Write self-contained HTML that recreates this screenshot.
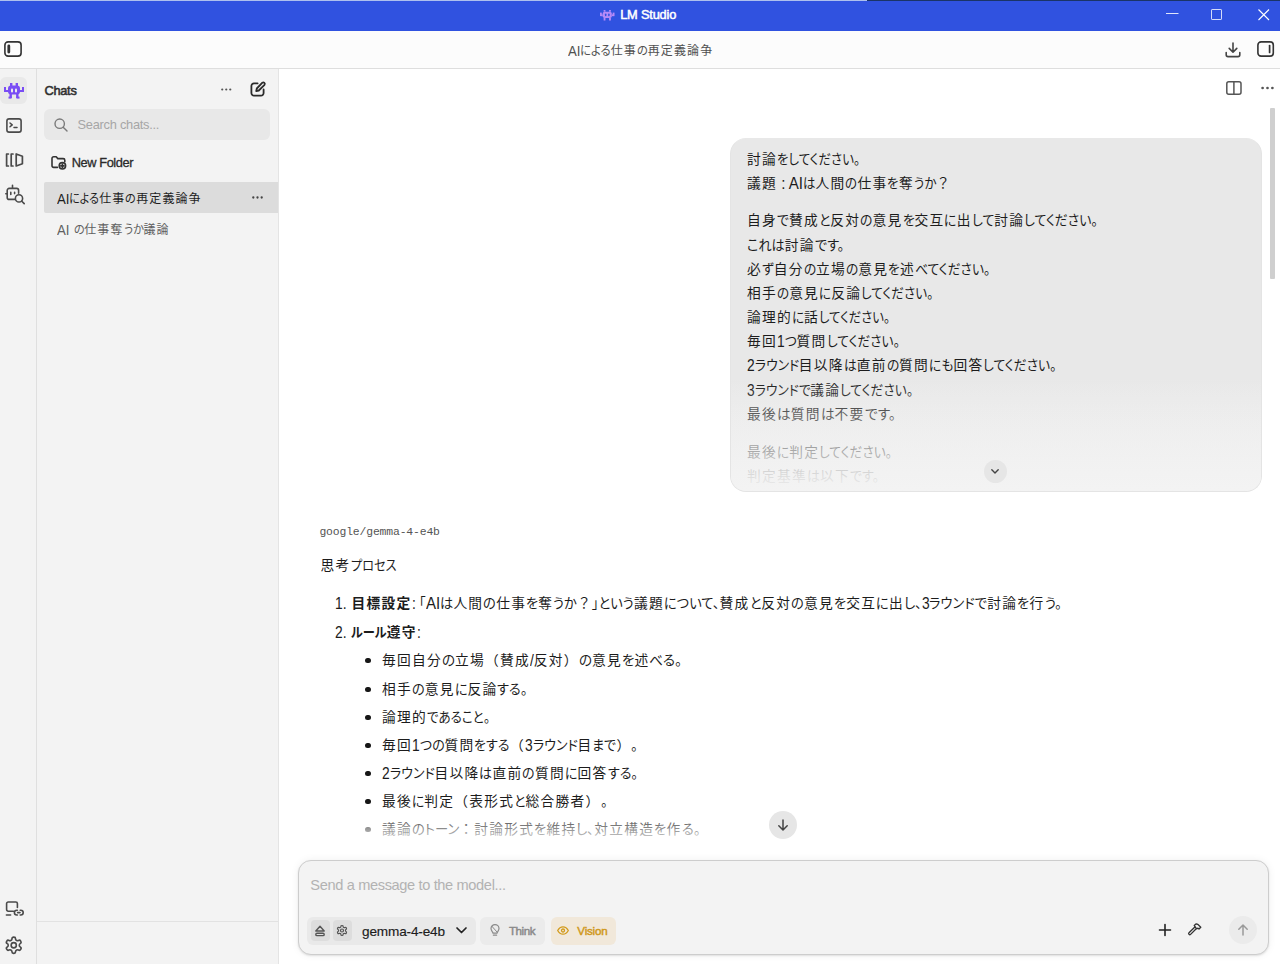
<!DOCTYPE html>
<html lang="ja">
<head>
<meta charset="utf-8">
<title>LM Studio</title>
<style>
*{box-sizing:border-box;margin:0;padding:0}
html,body{width:1280px;height:964px;overflow:hidden;background:#fff}
body{position:relative;font-family:"Liberation Sans","Noto Sans CJK JP",sans-serif;color:#1f1f1f;-webkit-font-smoothing:antialiased}
.abs{position:absolute}
svg{display:block;overflow:visible}
.ic{position:absolute;fill:none;stroke:#4a4a4a;stroke-width:1.6;stroke-linecap:round;stroke-linejoin:round}
/* ---------- title bar ---------- */
#titlebar{position:absolute;left:0;top:0;width:1280px;height:31px;background:#3052e0}
#topline-a{position:absolute;left:0;top:0;width:866.500px;height:1px;background:#aec0ee}
#topline-b{position:absolute;left:866.500px;top:0;width:413.500px;height:1px;background:#1a3468}
/* ---------- toolbar ---------- */
#toolbar{position:absolute;left:0;top:31px;width:1280px;height:38px;background:#fcfcfc;border-bottom:1px solid #dedede}
/* ---------- rail + sidebar ---------- */
#rail{position:absolute;left:0;top:69px;width:36.600px;height:895px;background:#f3f3f3;border-right:1px solid #dfdfdf}
#rail-active{position:absolute;left:0;top:8px;width:27px;height:27px;border-radius:6px;background:#e9e9e9}
#sidebar{position:absolute;left:36.600px;top:69px;width:242.400px;height:895px;background:#f3f3f3;border-right:1px solid #e4e4e4}
#side-divider{position:absolute;left:0;top:852px;width:241.400px;height:1px;background:#e2e2e2}
#search{position:absolute;left:7.800px;top:40.200px;width:225.800px;height:30.500px;border-radius:6px;background:#e8e8e8}
#chat1{position:absolute;left:7.900px;top:113.200px;width:234px;height:30.400px;background:#dcdcdc;border-radius:2px 0 0 2px}
/* ---------- main ---------- */
#main{position:absolute;left:279px;top:69px;width:1001px;height:895px;background:#fff;overflow:hidden}
#scroll{position:absolute;left:990.700px;top:38.800px;width:5.400px;height:171px;border-radius:1px;background:#cfcfcf}
#bubble{position:absolute;left:451px;top:69px;width:532px;height:354px;border-radius:16px;background:linear-gradient(#e8e8e8 0,#e8e8e8 68%,#f3f3f3 100%);border:1px solid #e4e4e4;border-top-color:#e8e8e8}
#bubblefade{position:absolute;left:0;top:241px;width:530px;height:111px;border-radius:0 0 15px 15px;background:linear-gradient(rgba(240,240,240,0) 0,rgba(240,240,240,.30) 30%,rgba(241,241,241,.62) 60%,rgba(242,242,242,.86) 82%,rgba(243,243,243,1) 100%)}
#expandbtn{position:absolute;left:252.500px;top:320.800px;width:23px;height:23px;border-radius:50%;background:#e6e6e6}
#assistant{position:absolute;left:0;top:0;width:1001px;height:791px}
#assistant ol,#assistant ul{list-style:none}
#assistant ul li::before{content:"";position:absolute;left:-17.100px;top:8.800px;width:5.600px;height:5.600px;border-radius:50%;background:#161616}
#chatfade{position:absolute;left:0;top:737px;width:985px;height:44px;background:linear-gradient(rgba(255,255,255,0) 0,rgba(255,255,255,.56) 52%,rgba(255,255,255,.85) 78%,rgba(255,255,255,1) 100%)}
#downbtn{position:absolute;left:490.300px;top:741.500px;width:28px;height:28px;border-radius:50%;background:#e6e6e6}
#composer{position:absolute;left:19px;top:791px;width:971px;height:95px;border-radius:13px;background:#f3f3f3;border:1px solid #cdcdcd;box-shadow:0 0 9px rgba(0,0,0,.06),0 1px 2px rgba(0,0,0,.10)}
#modelchip{position:absolute;left:8px;top:55.500px;width:168.500px;height:28px;border-radius:6px;background:#e9e9e9}
.mini{position:absolute;top:3.500px;width:19.500px;height:20.500px;border-radius:4px;background:#dddddd}
#thinkchip{position:absolute;left:181.200px;top:55.500px;width:65.300px;height:28px;border-radius:6px;background:#ebebeb}
#visionchip{position:absolute;left:251.500px;top:55.500px;width:65.500px;height:28px;border-radius:6px;background:#f1e8da}
#sendbtn{position:absolute;left:929.800px;top:54.700px;width:28.500px;height:28.500px;border-radius:50%;background:#ebebeb}
/* ---------- fitted text lines ---------- */
.L{position:absolute;white-space:nowrap;font-weight:400}
.L strong{font-weight:700}
.k{display:inline-block;white-space:nowrap;font-feature-settings:"palt";vertical-align:baseline;height:1em;line-height:1em;letter-spacing:0}
.a{display:inline-block;white-space:pre;letter-spacing:0;font-size:1.17em;height:1em;line-height:1em;vertical-align:baseline;position:relative;top:1px}
.a>span{display:inline-block;transform-origin:0 50%;transform:scaleX(.86);line-height:1em}
.k>span{display:inline-block;transform-origin:0 50%;line-height:1em}
</style>
</head>
<body>
<!-- ======= Title bar ======= -->
<header id="titlebar">
  <svg class="abs" style="left:599.500px;top:9.500px" width="14.500" height="10.500" viewBox="0 0 16 12" preserveAspectRatio="none">
    <g fill="#b58af7">
      <rect x="4" y="0" width="2" height="2"/><rect x="10" y="0" width="2" height="2"/>
      <rect x="3" y="2" width="10" height="7" rx="2"/>
      <rect x="0" y="3" width="2" height="4"/><rect x="14" y="3" width="2" height="4"/>
      <rect x="1" y="5" width="2" height="2"/><rect x="13" y="5" width="2" height="2"/>
      <rect x="4" y="9" width="2" height="3"/><rect x="10" y="9" width="2" height="3"/>
    </g>
    <rect x="5.5" y="4" width="1.6" height="3" rx=".8" fill="#3052e0"/><rect x="9" y="4" width="1.6" height="3" rx=".8" fill="#3052e0"/>
  </svg>
  <svg class="abs" style="left:1165.500px;top:12.600px" width="13" height="2" viewBox="0 0 13 2"><rect width="12.500" height="1" y="0" fill="#fff" fill-opacity=".85"/></svg>
  <svg class="abs" style="left:1211px;top:8.700px" width="12" height="12" viewBox="0 0 12 12"><rect x=".5" y=".5" width="10" height="10" rx=".6" fill="none" stroke="#fff" stroke-opacity=".8" stroke-width="1"/></svg>
  <svg class="abs" style="left:1257.800px;top:8.700px" width="12" height="12" viewBox="0 0 12 12"><path d="M.5 .5L11 11M11 .5L.5 11" fill="none" stroke="#fff" stroke-width="1.100"/></svg>
  <h1 class="L" id="l_app" style="left:620.16px;top:6px;font-size:12.8px;line-height:18px;color:#fff;letter-spacing:-0.186px;-webkit-text-stroke:0.5px #fff">LM Studio</h1>
  <div id="topline-a"></div><div id="topline-b"></div>
</header>

<!-- ======= Toolbar ======= -->
<div id="toolbar">
  <h2 class="L J" id="t_title" style="left:567.63px;top:11px;font-size:11.99px;line-height:18px;color:#505050;letter-spacing:1.110px"><span class="a" style="width:12.46px"><span style="transform:scaleX(0.94)">AI</span></span><span class="k" style="width:30.58px"><span style="transform:scaleX(0.9440)">による</span></span>仕事<span class="k" style="width:10.92px"><span style="transform:scaleX(0.9440)">の</span></span>再定義論争</h2>
  <svg class="ic" style="left:4px;top:10px;stroke:#333" width="18" height="16" viewBox="0 0 18 16"><rect x=".9" y=".9" width="16.200" height="14.200" rx="3.200"/><path d="M4.800 5v6" stroke-width="2.800"/></svg>
  <svg class="ic" style="left:1225px;top:11px;stroke:#444" width="16" height="16" viewBox="0 0 16 16"><path d="M8 1v9M4.2 6.4L8 10.2l3.800-3.800M1.200 10.600v2.200a1.800 1.800 0 0 0 1.800 1.800h10a1.800 1.800 0 0 0 1.800-1.800v-2.200"/></svg>
  <svg class="ic" style="left:1256.800px;top:10px;stroke:#333" width="18" height="16" viewBox="0 0 18 16"><rect x=".9" y=".9" width="15.400" height="14.200" rx="3.200"/><path d="M12.600 4.600v6.800" stroke-width="1.700"/></svg>
</div>

<!-- ======= Icon rail ======= -->
<nav id="rail">
  <div id="rail-active"></div>
  <svg class="abs" style="left:4px;top:14px" width="20" height="16" viewBox="0 0 20 16">
    <g fill="#7a4df5">
      <rect x="6" y="0" width="2.400" height="3"/><rect x="11.600" y="0" width="2.400" height="3"/>
      <rect x="4" y="2.500" width="12" height="9" rx="3"/>
      <rect x="0" y="4" width="2" height="5"/><rect x="18" y="4" width="2" height="5"/>
      <rect x="0" y="7" width="5" height="2"/><rect x="15" y="7" width="5" height="2"/>
      <rect x="5.500" y="11" width="2.400" height="4"/><rect x="12.100" y="11" width="2.400" height="4"/>
      <rect x="4.500" y="13.600" width="3" height="2"/><rect x="12.500" y="13.600" width="3" height="2"/>
    </g>
    <rect x="7" y="5.500" width="2" height="4" rx="1" fill="#eee"/><rect x="11" y="5.500" width="2" height="4" rx="1" fill="#eee"/>
  </svg>
  <svg class="ic" style="left:6px;top:49px" width="16" height="15" viewBox="0 0 16 15"><rect x=".9" y=".9" width="14.200" height="13.200" rx="2.200"/><path d="M4 5l2.200 1.900L4 8.800M8 9.400h3" stroke-width="1.500"/></svg>
  <svg class="ic" style="left:5px;top:84px;stroke-width:1.700" width="19" height="14" viewBox="0 0 19 14"><path d="M3.400 1H1.600v12h1.800M8 1H6.200v12H8M11.200 1v12l6.200-2.200V3.200z"/></svg>
  <svg class="ic" style="left:5px;top:115px;stroke-width:1.600" width="20" height="21" viewBox="0 0 20 21"><path d="M7.500 4.400V1.200M9.600 15.400H4.200a2 2 0 0 1-2-2V6.400a2 2 0 0 1 2-2h7.400a2 2 0 0 1 2 2v2.800M.8 9.800h1.400M5.800 8.400v2M9.600 8.400v1.200"/><circle cx="14" cy="14.400" r="3.600"/><path d="M16.800 17.200l2.400 2.400"/></svg>
  <svg class="ic" style="left:4.600px;top:832px;stroke-width:1.600" width="19" height="16" viewBox="0 0 19 16"><path d="M8.400 10.200H3.200a1.600 1.600 0 0 1-1.600-1.600V2.600A1.600 1.600 0 0 1 3.200 1h7.600a1.600 1.600 0 0 1 1.600 1.600v3.800M1.400 14h4.200M12.400 9.200h-.6a2.400 2.400 0 0 0 0 4.800h.6M15.200 9.200h.6a2.400 2.400 0 0 1 0 4.800h-.6M12.600 11.600h2.400"/></svg>
  <svg class="ic" style="left:4.300px;top:865.500px;stroke-width:1.700" width="19.500" height="20.500" viewBox="0 0 24 24"><path d="M12.220 2h-.44a2 2 0 0 0-2 2v.18a2 2 0 0 1-1 1.730l-.43.250a2 2 0 0 1-2 0l-.15-.080a2 2 0 0 0-2.730.730l-.22.380a2 2 0 0 0 .730 2.730l.15.100a2 2 0 0 1 1 1.720v.51a2 2 0 0 1-1 1.740l-.15.090a2 2 0 0 0-.730 2.730l.22.380a2 2 0 0 0 2.730.730l.15-.080a2 2 0 0 1 2 0l.43.250a2 2 0 0 1 1 1.730V20a2 2 0 0 0 2 2h.44a2 2 0 0 0 2-2v-.18a2 2 0 0 1 1-1.730l.43-.250a2 2 0 0 1 2 0l.15.080a2 2 0 0 0 2.730-.730l.22-.390a2 2 0 0 0-.730-2.730l-.15-.080a2 2 0 0 1-1-1.740v-.500a2 2 0 0 1 1-1.740l.15-.090a2 2 0 0 0 .730-2.730l-.22-.380a2 2 0 0 0-2.730-.730l-.15.080a2 2 0 0 1-2 0l-.43-.250a2 2 0 0 1-1-1.730V4a2 2 0 0 0-2-2z" stroke-width="2"/><circle cx="12" cy="12" r="3.200" stroke-width="2"/></svg>
</nav>

<!-- ======= Sidebar ======= -->
<aside id="sidebar">
  <h3 class="L" id="l_chats" style="left:7.82px;top:13px;font-size:12.8px;line-height:18px;color:#303030;letter-spacing:-0.264px;-webkit-text-stroke:0.55px #303030">Chats</h3>
  <svg class="abs" style="left:184.400px;top:18.500px" width="10.500" height="3" viewBox="0 0 11 3"><g fill="#555"><circle cx="1.300" cy="1.500" r="1.150"/><circle cx="5.500" cy="1.500" r="1.150"/><circle cx="9.700" cy="1.500" r="1.150"/></g></svg>
  <svg class="ic" style="left:213.600px;top:12.400px;stroke:#2a2a2a;stroke-width:1.800" width="16" height="16" viewBox="0 0 16 16"><path d="M7.600 2.400H4a2.600 2.600 0 0 0-2.600 2.600v7A2.600 2.600 0 0 0 4 14.600h7A2.600 2.600 0 0 0 13.600 12V8.400"/><path d="M12.400 1.700a1.500 1.500 0 0 1 2.100 2.100L8.800 9.500l-2.600.600.600-2.600z"/></svg>
  <div id="search">
    <svg class="ic" style="left:10px;top:9px;stroke:#7a7a7a;stroke-width:1.400" width="14" height="14" viewBox="0 0 14 14"><circle cx="5.700" cy="5.700" r="4.700"/><path d="M9.200 9.200l3.800 3.800"/></svg>
    <span class="L" id="l_search" style="left:33.16px;top:6.8px;font-size:12.8px;line-height:18px;color:#a6a6a6;letter-spacing:-0.250px">Search chats...</span>
  </div>
  <svg class="ic" style="left:14.400px;top:87px;stroke:#333;stroke-width:1.600" width="16" height="14" viewBox="0 0 16 14"><path d="M6.400 11.400H2.600A1.600 1.600 0 0 1 1 9.800V2.400A1.600 1.600 0 0 1 2.600.8h2.600l1.600 1.800h5.400a1.600 1.600 0 0 1 1.600 1.600v1.600"/><circle cx="11.400" cy="9.800" r="3.200"/><path d="M11.400 8.200v3.200M9.800 9.800h3.200" stroke-width="1.700"/></svg>
  <div class="L" id="l_newf" style="left:35.09px;top:85px;font-size:12.8px;line-height:18px;color:#2a2a2a;letter-spacing:-0.400px;-webkit-text-stroke:0.3px #2a2a2a">New Folder</div>
  <div id="chat1">
    <span class="L J" id="s_chat1" style="left:12.18px;top:7.8px;font-size:11.99px;line-height:18px;color:#1e1e1e;letter-spacing:1.110px"><span class="a" style="width:12.46px"><span style="transform:scaleX(0.94)">AI</span></span><span class="k" style="width:30.16px"><span style="transform:scaleX(0.9310)">による</span></span>仕事<span class="k" style="width:10.76px"><span style="transform:scaleX(0.9310)">の</span></span>再定義論争</span>
    <svg class="abs" style="left:208px;top:14px" width="11" height="3" viewBox="0 0 11 3"><g fill="#444"><circle cx="1.300" cy="1.500" r="1.150"/><circle cx="5.500" cy="1.500" r="1.150"/><circle cx="9.700" cy="1.500" r="1.150"/></g></svg>
  </div>
  <div class="L J" id="s_chat2" style="left:20.8px;top:152px;font-size:11.99px;line-height:18px;color:#606060;letter-spacing:1.110px"><span class="a" style="width:16.11px"><span style="transform:scaleX(0.94)">AI </span></span><span class="k" style="width:10.72px"><span style="transform:scaleX(0.9275)">の</span></span>仕事奪<span class="k" style="width:20.00px"><span style="transform:scaleX(0.9275)">うか</span></span>議論</div>
  <div id="side-divider"></div>
</aside>

<!-- ======= Main chat area ======= -->
<main id="main">
  <svg class="ic" style="left:947px;top:12px;stroke:#555;stroke-width:1.500" width="16" height="14" viewBox="0 0 16 14"><rect x=".8" y=".8" width="14.200" height="12.400" rx="2"/><path d="M7.900 .8v12.400"/></svg>
  <svg class="abs" style="left:981.600px;top:17.200px" width="13" height="4" viewBox="0 0 13 4"><g fill="#555"><circle cx="1.600" cy="2" r="1.350"/><circle cx="6.500" cy="2" r="1.350"/><circle cx="11.400" cy="2" r="1.350"/></g></svg>
  <div id="scroll"></div>
  <!-- user message -->
  <section id="bubble">
    <p class="L J" id="u1" style="left:16px;top:9px;font-size:13.73px;line-height:24px;color:#1c1c1c;letter-spacing:1.270px">討論<span class="k" style="width:83.19px"><span style="transform:scaleX(0.9102)">をしてください。</span></span></p>
    <p class="L J" id="u2" style="left:16px;top:33px;font-size:13.73px;line-height:24px;color:#1c1c1c;letter-spacing:1.270px">議題<span class="a" style="width:26.00px"><span style="transform:scaleX(0.94)"> : AI</span></span><span class="k" style="width:12.47px"><span style="transform:scaleX(0.9080)">は</span></span>人間<span class="k" style="width:12.02px"><span style="transform:scaleX(0.9080)">の</span></span>仕事<span class="k" style="width:11.51px"><span style="transform:scaleX(0.9080)">を</span></span>奪<span class="k" style="width:22.42px"><span style="transform:scaleX(0.9080)">うか</span></span>？</p>
    <p class="L J" id="u3" style="left:16px;top:70px;font-size:13.73px;line-height:24px;color:#1c1c1c;letter-spacing:1.270px">自身<span class="k" style="width:11.91px"><span style="transform:scaleX(0.9385)">で</span></span>賛成<span class="k" style="width:11.35px"><span style="transform:scaleX(0.9385)">と</span></span>反対<span class="k" style="width:12.42px"><span style="transform:scaleX(0.9385)">の</span></span>意見<span class="k" style="width:11.89px"><span style="transform:scaleX(0.9385)">を</span></span>交互<span class="k" style="width:12.41px"><span style="transform:scaleX(0.9385)">に</span></span>出<span class="k" style="width:22.35px"><span style="transform:scaleX(0.9385)">して</span></span>討論<span class="k" style="width:73.89px"><span style="transform:scaleX(0.9385)">してください。</span></span></p>
    <p class="L J" id="u4" style="left:16px;top:95px;font-size:13.73px;line-height:24px;color:#1c1c1c;letter-spacing:1.270px"><span class="k" style="width:37.68px"><span style="transform:scaleX(0.9581)">これは</span></span>討論<span class="k" style="width:29.30px"><span style="transform:scaleX(0.9581)">です。</span></span></p>
    <p class="L J" id="u5" style="left:16px;top:119px;font-size:13.73px;line-height:24px;color:#1c1c1c;letter-spacing:1.270px">必<span class="k" style="width:11.79px"><span style="transform:scaleX(0.9304)">ず</span></span>自分<span class="k" style="width:12.31px"><span style="transform:scaleX(0.9304)">の</span></span>立場<span class="k" style="width:12.31px"><span style="transform:scaleX(0.9304)">の</span></span>意見<span class="k" style="width:11.79px"><span style="transform:scaleX(0.9304)">を</span></span>述<span class="k" style="width:75.36px"><span style="transform:scaleX(0.9304)">べてください。</span></span></p>
    <p class="L J" id="u6" style="left:16px;top:143px;font-size:13.73px;line-height:24px;color:#1c1c1c;letter-spacing:1.270px">相手<span class="k" style="width:12.15px"><span style="transform:scaleX(0.9183)">の</span></span>意見<span class="k" style="width:12.14px"><span style="transform:scaleX(0.9183)">に</span></span>反論<span class="k" style="width:72.30px"><span style="transform:scaleX(0.9183)">してください。</span></span></p>
    <p class="L J" id="u7" style="left:16px;top:167px;font-size:13.73px;line-height:24px;color:#1c1c1c;letter-spacing:1.270px">論理的<span class="k" style="width:11.95px"><span style="transform:scaleX(0.9037)">に</span></span>話<span class="k" style="width:71.15px"><span style="transform:scaleX(0.9037)">してください。</span></span></p>
    <p class="L J" id="u8" style="left:16px;top:191px;font-size:13.73px;line-height:24px;color:#1c1c1c;letter-spacing:1.270px">毎回<span class="a" style="width:7.69px"><span>1</span></span><span class="k" style="width:11.93px"><span style="transform:scaleX(0.9253)">つ</span></span>質問<span class="k" style="width:72.85px"><span style="transform:scaleX(0.9253)">してください。</span></span></p>
    <p class="L J" id="u9" style="left:16px;top:215px;font-size:13.73px;line-height:24px;color:#1c1c1c;letter-spacing:1.270px"><span class="a" style="width:7.69px"><span>2</span></span><span class="k" style="width:44.16px"><span style="transform:scaleX(0.9341)">ラウンド</span></span>目以降<span class="k" style="width:12.83px"><span style="transform:scaleX(0.9341)">は</span></span>直前<span class="k" style="width:12.36px"><span style="transform:scaleX(0.9341)">の</span></span>質問<span class="k" style="width:24.48px"><span style="transform:scaleX(0.9341)">にも</span></span>回答<span class="k" style="width:73.54px"><span style="transform:scaleX(0.9341)">してください。</span></span></p>
    <p class="L J" id="u10" style="left:16px;top:240px;font-size:13.73px;line-height:24px;color:#1c1c1c;letter-spacing:1.270px"><span class="a" style="width:7.69px"><span>3</span></span><span class="k" style="width:55.67px"><span style="transform:scaleX(0.9286)">ラウンドで</span></span>議論<span class="k" style="width:73.11px"><span style="transform:scaleX(0.9286)">してください。</span></span></p>
    <p class="L J" id="u11" style="left:16px;top:264px;font-size:13.73px;line-height:24px;color:#1c1c1c;letter-spacing:1.270px">最後<span class="k" style="width:13.80px"><span style="transform:scaleX(1.0049)">は</span></span>質問<span class="k" style="width:13.80px"><span style="transform:scaleX(1.0049)">は</span></span>不要<span class="k" style="width:30.73px"><span style="transform:scaleX(1.0049)">です。</span></span></p>
    <p class="L J" id="u12" style="left:16px;top:302px;font-size:13.73px;line-height:24px;color:#1c1c1c;letter-spacing:1.270px">最後<span class="k" style="width:12.26px"><span style="transform:scaleX(0.9278)">に</span></span>判定<span class="k" style="width:73.05px"><span style="transform:scaleX(0.9278)">してください。</span></span></p>
    <p class="L J" id="u13" style="left:16px;top:326px;font-size:13.73px;line-height:24px;color:#1c1c1c;letter-spacing:1.270px">判定基準<span class="k" style="width:13.05px"><span style="transform:scaleX(0.9502)">は</span></span>以下<span class="k" style="width:29.06px"><span style="transform:scaleX(0.9502)">です。</span></span></p>
    <div id="bubblefade"></div>
    <div id="expandbtn"><svg class="ic" style="left:7.500px;top:9.500px;stroke:#444;stroke-width:1.400" width="8" height="5" viewBox="0 0 8 5"><path d="M.8 .8L4 4l3.200-3.200"/></svg></div>
  </section>
  <!-- assistant message -->
  <article id="assistant">
    <div class="L" id="l_model" style="left:40.4px;top:454px;font-size:11.4px;line-height:18px;color:#555;letter-spacing:-0.146px;font-family:'Liberation Mono','DejaVu Sans Mono',monospace">google/gemma-4-e4b</div>
    <p class="L J" id="a_head" style="left:41.61px;top:485px;font-size:13.73px;line-height:24px;color:#1c1c1c;letter-spacing:1.270px">思考<span class="k" style="width:45.51px"><span style="transform:scaleX(0.8856)">プロセス</span></span></p>
    <ol>
      <li class="L J" id="a_1" style="left:56.37px;top:523px;font-size:13.73px;line-height:24px;color:#1c1c1c;letter-spacing:1.270px"><span class="a" style="width:16.25px"><span>1. </span></span><strong>目標設定</strong><span class="a" style="width:7.67px"><span>: </span></span><span class="k" style="width:6.63px"><span style="transform:scaleX(0.9663)">「</span></span><span class="a" style="width:14.26px"><span style="transform:scaleX(0.94)">AI</span></span><span class="k" style="width:13.27px"><span style="transform:scaleX(0.9663)">は</span></span>人間<span class="k" style="width:12.79px"><span style="transform:scaleX(0.9663)">の</span></span>仕事<span class="k" style="width:12.24px"><span style="transform:scaleX(0.9663)">を</span></span>奪<span class="k" style="width:23.86px"><span style="transform:scaleX(0.9663)">うか</span></span>？<span class="k" style="width:41.84px"><span style="transform:scaleX(0.9663)">」という</span></span>議題<span class="k" style="width:55.49px"><span style="transform:scaleX(0.9663)">について、</span></span>賛成<span class="k" style="width:11.69px"><span style="transform:scaleX(0.9663)">と</span></span>反対<span class="k" style="width:12.79px"><span style="transform:scaleX(0.9663)">の</span></span>意見<span class="k" style="width:12.24px"><span style="transform:scaleX(0.9663)">を</span></span>交互<span class="k" style="width:12.77px"><span style="transform:scaleX(0.9663)">に</span></span>出<span class="k" style="width:17.83px"><span style="transform:scaleX(0.9663)">し、</span></span><span class="a" style="width:7.69px"><span>3</span></span><span class="k" style="width:57.93px"><span style="transform:scaleX(0.9663)">ラウンドで</span></span>討論<span class="k" style="width:12.24px"><span style="transform:scaleX(0.9663)">を</span></span>行<span class="k" style="width:16.85px"><span style="transform:scaleX(0.9663)">う。</span></span></li>
      <li class="L J" id="a_2" style="left:55.78px;top:552px;font-size:13.73px;line-height:24px;color:#1c1c1c;letter-spacing:1.270px"><span class="a" style="width:16.25px"><span>2. </span></span><strong><span class="k" style="width:35.64px"><span style="transform:scaleX(0.8902)">ルール</span></span></strong><strong>遵守</strong><span class="a" style="width:3.84px"><span>:</span></span></li>
    </ol>
    <ul>
      <li class="L J" id="b1" style="left:103px;top:580px;font-size:13.73px;line-height:24px;color:#1c1c1c;letter-spacing:1.270px">毎回自分<span class="k" style="width:13.10px"><span style="transform:scaleX(0.9895)">の</span></span>立場（賛成<span class="a" style="width:3.84px"><span>/</span></span>反対）<span class="k" style="width:13.10px"><span style="transform:scaleX(0.9895)">の</span></span>意見<span class="k" style="width:12.54px"><span style="transform:scaleX(0.9895)">を</span></span>述<span class="k" style="width:32.79px"><span style="transform:scaleX(0.9895)">べる。</span></span></li>
      <li class="L J" id="b2" style="left:103px;top:609px;font-size:13.73px;line-height:24px;color:#1c1c1c;letter-spacing:1.270px">相手<span class="k" style="width:12.74px"><span style="transform:scaleX(0.9624)">の</span></span>意見<span class="k" style="width:12.72px"><span style="transform:scaleX(0.9624)">に</span></span>反論<span class="k" style="width:30.38px"><span style="transform:scaleX(0.9624)">する。</span></span></li>
      <li class="L J" id="b3" style="left:103px;top:637px;font-size:13.73px;line-height:24px;color:#1c1c1c;letter-spacing:1.270px">論理的<span class="k" style="width:63.05px"><span style="transform:scaleX(0.9141)">であること。</span></span></li>
      <li class="L J" id="b4" style="left:103px;top:665px;font-size:13.73px;line-height:24px;color:#1c1c1c;letter-spacing:1.270px">毎回<span class="a" style="width:7.69px"><span>1</span></span><span class="k" style="width:24.78px"><span style="transform:scaleX(0.9493)">つの</span></span>質問<span class="k" style="width:35.48px"><span style="transform:scaleX(0.9493)">をする</span></span>（<span class="a" style="width:7.69px"><span>3</span></span><span class="k" style="width:44.88px"><span style="transform:scaleX(0.9493)">ラウンド</span></span>目<span class="k" style="width:24.04px"><span style="transform:scaleX(0.9493)">まで</span></span>）<span class="k" style="width:6.51px"><span style="transform:scaleX(0.9493)">。</span></span></li>
      <li class="L J" id="b5" style="left:103px;top:693px;font-size:13.73px;line-height:24px;color:#1c1c1c;letter-spacing:1.270px"><span class="a" style="width:7.69px"><span>2</span></span><span class="k" style="width:44.83px"><span style="transform:scaleX(0.9481)">ラウンド</span></span>目以降<span class="k" style="width:13.02px"><span style="transform:scaleX(0.9481)">は</span></span>直前<span class="k" style="width:12.55px"><span style="transform:scaleX(0.9481)">の</span></span>質問<span class="k" style="width:12.53px"><span style="transform:scaleX(0.9481)">に</span></span>回答<span class="k" style="width:29.92px"><span style="transform:scaleX(0.9481)">する。</span></span></li>
      <li class="L J" id="b6" style="left:103px;top:721px;font-size:13.73px;line-height:24px;color:#1c1c1c;letter-spacing:1.270px">最後<span class="k" style="width:12.36px"><span style="transform:scaleX(0.9349)">に</span></span>判定（表形式<span class="k" style="width:11.31px"><span style="transform:scaleX(0.9349)">と</span></span>総合勝者）<span class="k" style="width:6.41px"><span style="transform:scaleX(0.9349)">。</span></span></li>
      <li class="L J" id="b7" style="left:103px;top:749px;font-size:13.73px;line-height:24px;color:#000;letter-spacing:1.270px">議論<span class="k" style="width:47.29px"><span style="transform:scaleX(0.9691)">のトーン</span></span>：討論形式<span class="k" style="width:12.28px"><span style="transform:scaleX(0.9691)">を</span></span>維持<span class="k" style="width:17.88px"><span style="transform:scaleX(0.9691)">し、</span></span>対立構造<span class="k" style="width:12.28px"><span style="transform:scaleX(0.9691)">を</span></span>作<span class="k" style="width:18.57px"><span style="transform:scaleX(0.9691)">る。</span></span></li>
    </ul>
    <div id="chatfade"></div>
    <div id="downbtn"><svg class="ic" style="left:8px;top:8px;stroke:#444;stroke-width:1.500" width="12" height="12" viewBox="0 0 12 12"><path d="M6 1v9.800M1.800 6.800L6 11l4.200-4.200"/></svg></div>
  </article>
  <!-- composer -->
  <div id="composer">
    <div class="L" id="l_ph" style="left:11.36px;top:14px;font-size:14.6px;line-height:20px;color:#b2b2b2;letter-spacing:-0.361px">Send a message to the model...</div>
    <div id="modelchip">
      <div class="mini" style="left:3.500px"></div>
      <svg class="ic" style="left:7.300px;top:8px;stroke:#555;stroke-width:1.400" width="12" height="12" viewBox="0 0 12 12"><path d="M6 1.200L1.800 6h8.400z"/><rect x="1.800" y="8.200" width="8.400" height="2.400" rx="1.200"/></svg>
      <div class="mini" style="left:25.500px"></div>
      <svg class="ic" style="left:29.300px;top:7px;stroke:#555" width="12" height="13" viewBox="0 0 24 24"><path d="M12.220 2h-.44a2 2 0 0 0-2 2v.18a2 2 0 0 1-1 1.730l-.43.250a2 2 0 0 1-2 0l-.15-.080a2 2 0 0 0-2.730.730l-.22.380a2 2 0 0 0 .730 2.730l.15.100a2 2 0 0 1 1 1.720v.51a2 2 0 0 1-1 1.740l-.15.090a2 2 0 0 0-.730 2.730l.22.380a2 2 0 0 0 2.730.730l.15-.080a2 2 0 0 1 2 0l.43.250a2 2 0 0 1 1 1.730V20a2 2 0 0 0 2 2h.44a2 2 0 0 0 2-2v-.18a2 2 0 0 1 1-1.730l.43-.250a2 2 0 0 1 2 0l.15.080a2 2 0 0 0 2.730-.730l.22-.390a2 2 0 0 0-.730-2.730l-.15-.080a2 2 0 0 1-1-1.740v-.500a2 2 0 0 1 1-1.740l.15-.090a2 2 0 0 0 .730-2.730l-.22-.380a2 2 0 0 0-2.730-.730l-.15.080a2 2 0 0 1-2 0l-.43-.250a2 2 0 0 1-1-1.730V4a2 2 0 0 0-2-2z" stroke-width="2.400"/><circle cx="12" cy="12" r="3" stroke-width="2.400"/></svg>
      <svg class="ic" style="left:149px;top:10px;stroke:#222;stroke-width:1.700" width="11" height="7" viewBox="0 0 11 7"><path d="M1 1l4.500 4.500L10 1"/></svg>
      <span class="L" id="l_gemma" style="left:55.04px;top:6.5px;font-size:13.6px;line-height:18px;color:#1c1c1c;letter-spacing:-0.168px;-webkit-text-stroke:0.15px #1c1c1c">gemma-4-e4b</span>
    </div>
    <div id="thinkchip">
      <svg class="ic" style="left:10px;top:7px;stroke:#8a8a8a;stroke-width:1.200" width="10" height="13" viewBox="0 0 10 13"><path d="M3 9.200C3 7.800 1 7 1 4.600a4 4 0 0 1 8 0C9 7 7 7.800 7 9.200zM3.400 11.200h3.200"/><path d="M2 2.400l5 5.600" stroke-width="1"/></svg>
      <span class="L" id="l_think" style="left:28.73px;top:5.5px;font-size:11.6px;line-height:18px;color:#8a8a8a;letter-spacing:-0.446px;-webkit-text-stroke:0.45px #8a8a8a">Think</span>
    </div>
    <div id="visionchip">
      <svg class="ic" style="left:6px;top:9px;stroke:#d39b1c;stroke-width:1.300" width="12" height="9" viewBox="0 0 12 9"><path d="M.7 4.500C2 2 3.800.8 6 .8s4 1.200 5.300 3.700C10 7 8.200 8.200 6 8.200S2 7 .7 4.500z"/><circle cx="6" cy="4.500" r="1.500"/></svg>
      <span class="L" id="l_vision" style="left:26.86px;top:5.5px;font-size:11.6px;line-height:18px;color:#d0981b;letter-spacing:-0.230px;-webkit-text-stroke:0.45px #d0981b">Vision</span>
    </div>
    <svg class="ic" style="left:860px;top:63px;stroke:#222;stroke-width:1.600" width="12" height="12" viewBox="0 0 12 12"><path d="M6 .5v11M.5 6h11"/></svg>
    <svg class="ic" style="left:889px;top:62px;stroke:#333;stroke-width:1.300" width="14" height="14" viewBox="0 0 14 14"><path d="M8.200 5.800L2.600 11.400a1.100 1.100 0 0 1-1.600-1.600L6.600 4.200M6.200 2.400l1.400-1.200c.8-.4 1.600-.2 2.400.4l2.800 2.600-1.800 1.800-1-.800-1.400.600z"/></svg>
    <div id="sendbtn"><svg class="ic" style="left:8.200px;top:8.200px;stroke:#9a9a9a;stroke-width:1.500" width="12" height="12" viewBox="0 0 12 12"><path d="M6 11V1.200M1.800 5.200L6 1l4.200 4.200"/></svg></div>
  </div>
</main>
</body></html>
